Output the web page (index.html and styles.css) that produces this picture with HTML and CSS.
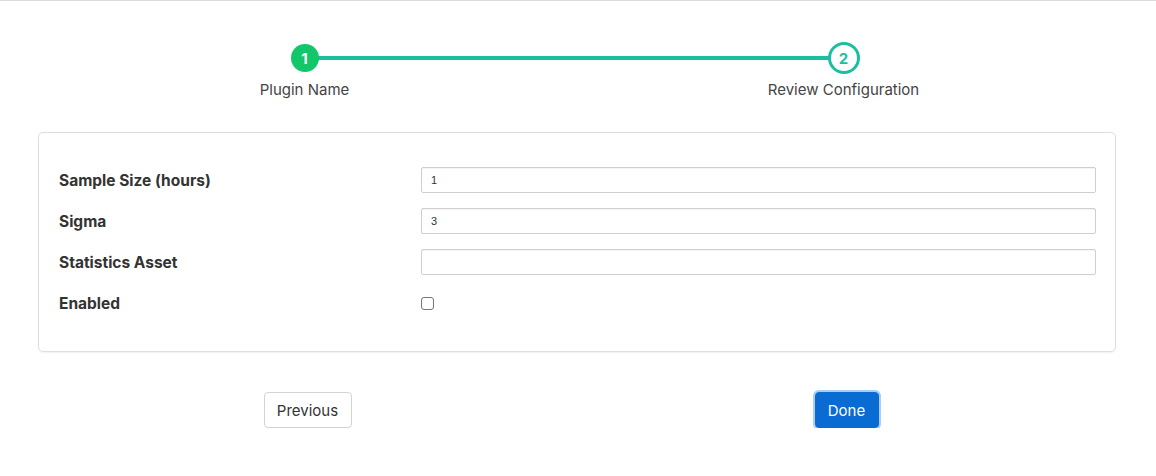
FILE: index.html
```html
<!DOCTYPE html>
<html>
<head>
<meta charset="utf-8">
<link rel="stylesheet" href="styles.css">
</head>
<body>
<div class="page">
  <div class="steps">
    <div class="step step-done">
      <div class="marker"><span class="circle">1</span></div>
      <div class="step-label">Plugin Name</div>
    </div>
    <div class="step step-current">
      <div class="marker"><span class="circle">2</span></div>
      <div class="step-label">Review Configuration</div>
    </div>
  </div>

  <div class="card">
    <div class="row">
      <label class="field-label">Sample Size (hours)</label>
      <input class="text-input" type="text" value="1">
    </div>
    <div class="row">
      <label class="field-label">Sigma</label>
      <input class="text-input" type="text" value="3">
    </div>
    <div class="row">
      <label class="field-label">Statistics Asset</label>
      <input class="text-input" type="text" value="">
    </div>
    <div class="row">
      <label class="field-label">Enabled</label>
      <span class="checkbox"></span>
    </div>
  </div>

  <div class="actions">
    <div class="action-cell"><button class="btn btn-default">Previous</button></div>
    <div class="action-cell"><button class="btn btn-primary">Done</button></div>
  </div>
</div>
</body>
</html>
```

FILE: styles.css
```css
html, body {
  margin: 0;
  padding: 0;
  background: #fff;
}
body {
  border-top: 1px solid #dcdcdc;
  font-family: Inter, "Liberation Sans", Arial, sans-serif;
  color: #333;
}
.page {
  padding: 0 40px 0 38px;
}
.steps {
  display: grid;
  grid-template-columns: 1fr 1fr;
  margin: 41px 3px 0 -3px;
}
.step {
  display: flex;
  flex-direction: column;
  align-items: center;
  position: relative;
}
.marker {
  height: 32px;
  display: flex;
  align-items: center;
  justify-content: center;
  position: relative;
  width: 100%;
}
.step-done .marker::after {
  content: "";
  position: absolute;
  left: 50%;
  width: 100%;
  top: 14px;
  height: 4px;
  background: #1bbf9f;
  z-index: 0;
}
.circle {
  position: relative;
  z-index: 1;
  box-sizing: border-box;
  border-radius: 50%;
  display: flex;
  align-items: center;
  justify-content: center;
  font-weight: 700;
  font-size: 15px;
}
.step-done .circle {
  width: 28px;
  height: 28px;
  background: #14c66a;
  color: #fff;
}
.step-current .circle {
  width: 32px;
  height: 32px;
  background: #fff;
  border: 3px solid #1bbf9f;
  color: #1bbf9f;
}
.step-label {
  margin-top: 6px;
  font-size: 15px;
  line-height: 20px;
  color: #444;
}
.card {
  margin-top: 32px;
  border: 1px solid #dedede;
  border-radius: 5px;
  box-shadow: 0 1px 2px rgba(0,0,0,0.06);
  padding: 34px 19px 35px 20px;
  display: flex;
  flex-direction: column;
  gap: 15px;
}
.row {
  display: grid;
  grid-template-columns: 362px 1fr;
  align-items: center;
  height: 26px;
}
.field-label {
  font-size: 15.5px;
  font-weight: 700;
  color: #333;
}
.text-input {
  box-sizing: border-box;
  height: 26px;
  width: 100%;
  margin: 0;
  border: 1px solid #cfcfcf;
  border-radius: 2px;
  box-shadow: inset 0 1px 1px rgba(0,0,0,0.05);
  padding: 0 9px;
  font-family: "Liberation Sans", Arial, sans-serif;
  font-size: 11px;
  color: #333;
  background: #fff;
}
.checkbox {
  display: block;
  box-sizing: border-box;
  width: 13px;
  height: 13px;
  border: 1px solid #767676;
  border-radius: 3px;
  background: #fff;
}
.actions {
  display: grid;
  grid-template-columns: 1fr 1fr;
  margin-top: 40px;
}
.action-cell {
  display: flex;
  justify-content: center;
}
.btn {
  box-sizing: border-box;
  height: 36px;
  font-family: Inter, "Liberation Sans", Arial, sans-serif;
  font-size: 15px;
  border-radius: 4px;
  padding: 0 12px;
  cursor: pointer;
}
.btn-default {
  background: #fff;
  border: 1px solid #d3d3d3;
  color: #333;
  width: 88px;
}
.btn-primary {
  background: #0a6bd3;
  border: 1px solid #0a6bd3;
  color: #fff;
  width: 64px;
  box-shadow: 0 0 0 2px #a9cdf3;
}
```
